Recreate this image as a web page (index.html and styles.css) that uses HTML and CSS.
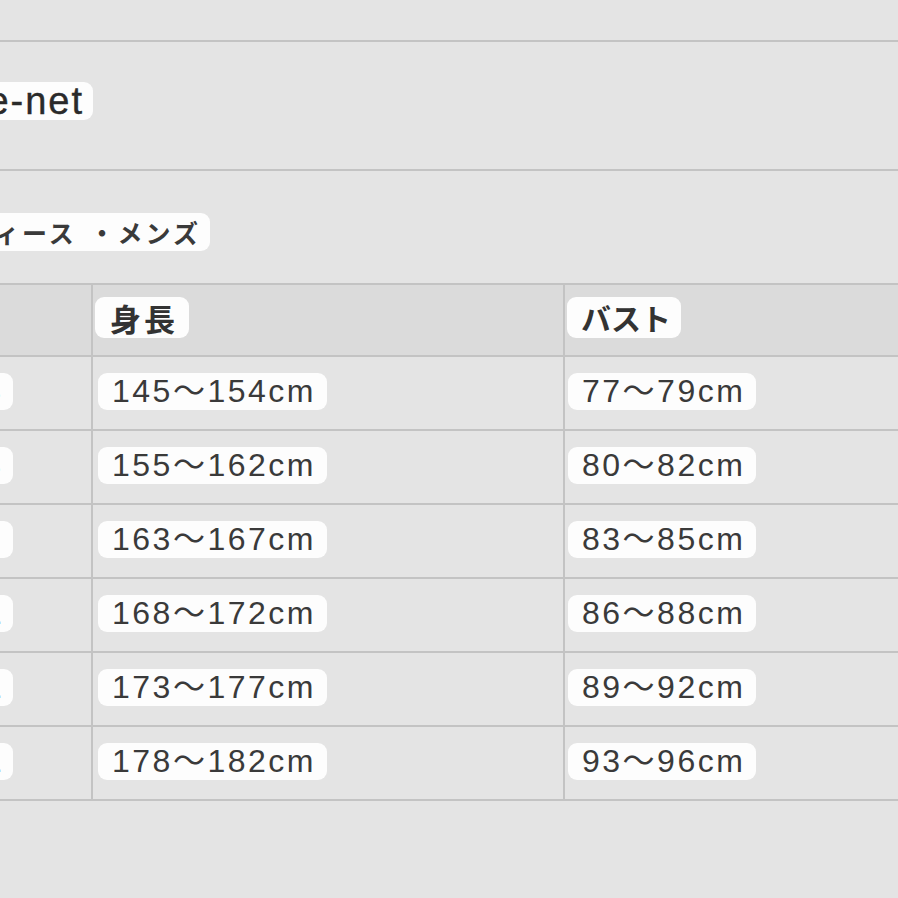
FILE: index.html
```html
<!DOCTYPE html>
<html lang="ja">
<head>
<meta charset="utf-8">
<title>サイズ表</title>
<link rel="stylesheet" href="styles.css">
</head>
<body>
<div class="page">
  <div class="topbar"></div>
  <div class="title">
    <div class="title-inner"><span class="pill pill-title">size-net</span></div>
  </div>
  <div class="subtitle">
    <div class="subtitle-inner"><span class="pill pill-sub">レディース ・メンズ</span></div>
  </div>
  <div class="table">
    <div class="row head">
      <div class="cell c1"></div>
      <div class="cell c2"><span class="pill pill-head pill-head-wide">身長</span></div>
      <div class="cell c3"><span class="pill pill-head">バスト</span></div>
    </div>
    <div class="row">
      <div class="cell c1"><span class="pill pill-label">SS</span></div>
      <div class="cell c2"><span class="pill pill-data">145～154cm</span></div>
      <div class="cell c3"><span class="pill pill-data">77～79cm</span></div>
    </div>
    <div class="row">
      <div class="cell c1"><span class="pill pill-label">S</span></div>
      <div class="cell c2"><span class="pill pill-data">155～162cm</span></div>
      <div class="cell c3"><span class="pill pill-data">80～82cm</span></div>
    </div>
    <div class="row">
      <div class="cell c1"><span class="pill pill-label">M</span></div>
      <div class="cell c2"><span class="pill pill-data">163～167cm</span></div>
      <div class="cell c3"><span class="pill pill-data">83～85cm</span></div>
    </div>
    <div class="row">
      <div class="cell c1"><span class="pill pill-label">L</span></div>
      <div class="cell c2"><span class="pill pill-data">168～172cm</span></div>
      <div class="cell c3"><span class="pill pill-data">86～88cm</span></div>
    </div>
    <div class="row">
      <div class="cell c1"><span class="pill pill-label">LL</span></div>
      <div class="cell c2"><span class="pill pill-data">173～177cm</span></div>
      <div class="cell c3"><span class="pill pill-data">89～92cm</span></div>
    </div>
    <div class="row">
      <div class="cell c1"><span class="pill pill-label">3L</span></div>
      <div class="cell c2"><span class="pill pill-data">178～182cm</span></div>
      <div class="cell c3"><span class="pill pill-data">93～96cm</span></div>
    </div>
  </div>
</div>
</body>
</html>
```

FILE: styles.css
```css
html, body {
  margin: 0;
  padding: 0;
  background: #e4e4e4;
  overflow: hidden;
  width: 898px;
  height: 898px;
}

.page {
  margin-left: -57px;
  width: 1000px;
  font-family: "Liberation Sans", "Noto Sans CJK JP", sans-serif;
  color: #363636;
}

.topbar {
  height: 40px;
  border-bottom: 2px solid #c3c3c3;
}

.title {
  height: 127px;
  border-bottom: 2px solid #c3c3c3;
}

.title-inner {
  width: 150px;
  display: flex;
  justify-content: flex-end;
  padding-top: 40px;
}

.subtitle {
  height: 112px;
}

.subtitle-inner {
  width: 267px;
  display: flex;
  justify-content: flex-end;
  padding-top: 42px;
}

.pill {
  display: inline-block;
  background: #fdfdfd;
  border-radius: 9px;
  white-space: nowrap;
}

.pill-title {
  font-size: 38px;
  line-height: 38px;
  height: 38px;
  letter-spacing: 2px;
  color: #2a2a2a;
  -webkit-text-stroke: 0.4px #2a2a2a;
  padding: 0 9px 0 10px;
  box-sizing: border-box;
}

.pill-sub {
  font-family: "Noto Sans CJK JP", sans-serif;
  font-weight: bold;
  font-size: 25px;
  line-height: 38px;
  height: 38px;
  letter-spacing: 3px;
  word-spacing: 4px;
  color: #3a3a3a;
  padding: 0 9px 0 10px;
}

.table {
  border-top: 2px solid #c3c3c3;
}

.row {
  display: grid;
  grid-template-columns: 150px 472px 1fr;
  height: 74px;
  box-sizing: border-box;
  border-bottom: 2px solid #c3c3c3;
}

.row.head {
  height: 72px;
  background: #dbdbdb;
}

.cell {
  box-sizing: border-box;
  padding-top: 16px;
  padding-left: 3px;
}

.c2 {
  padding-left: 5px;
}

.head .cell {
  padding-top: 12px;
  padding-left: 2px;
}

.c1, .c2 {
  border-right: 2px solid #c3c3c3;
}

.c1 {
  padding-left: 4px;
}

.pill-head {
  font-family: "Noto Sans CJK JP", sans-serif;
  font-weight: bold;
  font-size: 30px;
  line-height: 41px;
  height: 41px;
  color: #333333;
  padding: 0 10px 0 14px;
}

.pill-head-wide {
  font-size: 31px;
  letter-spacing: 3px;
  padding: 0 11px 0 15px;
}

.pill-data {
  font-size: 32px;
  line-height: 37px;
  height: 37px;
  letter-spacing: 2.5px;
  color: #3a3a3a;
  padding: 0 11px 0 14px;
}

.pill-label {
  font-size: 32px;
  line-height: 37px;
  height: 37px;
  width: 66px;
  box-sizing: border-box;
  text-align: right;
  padding-right: 12px;
  color: #3a3a3a;
}
```
